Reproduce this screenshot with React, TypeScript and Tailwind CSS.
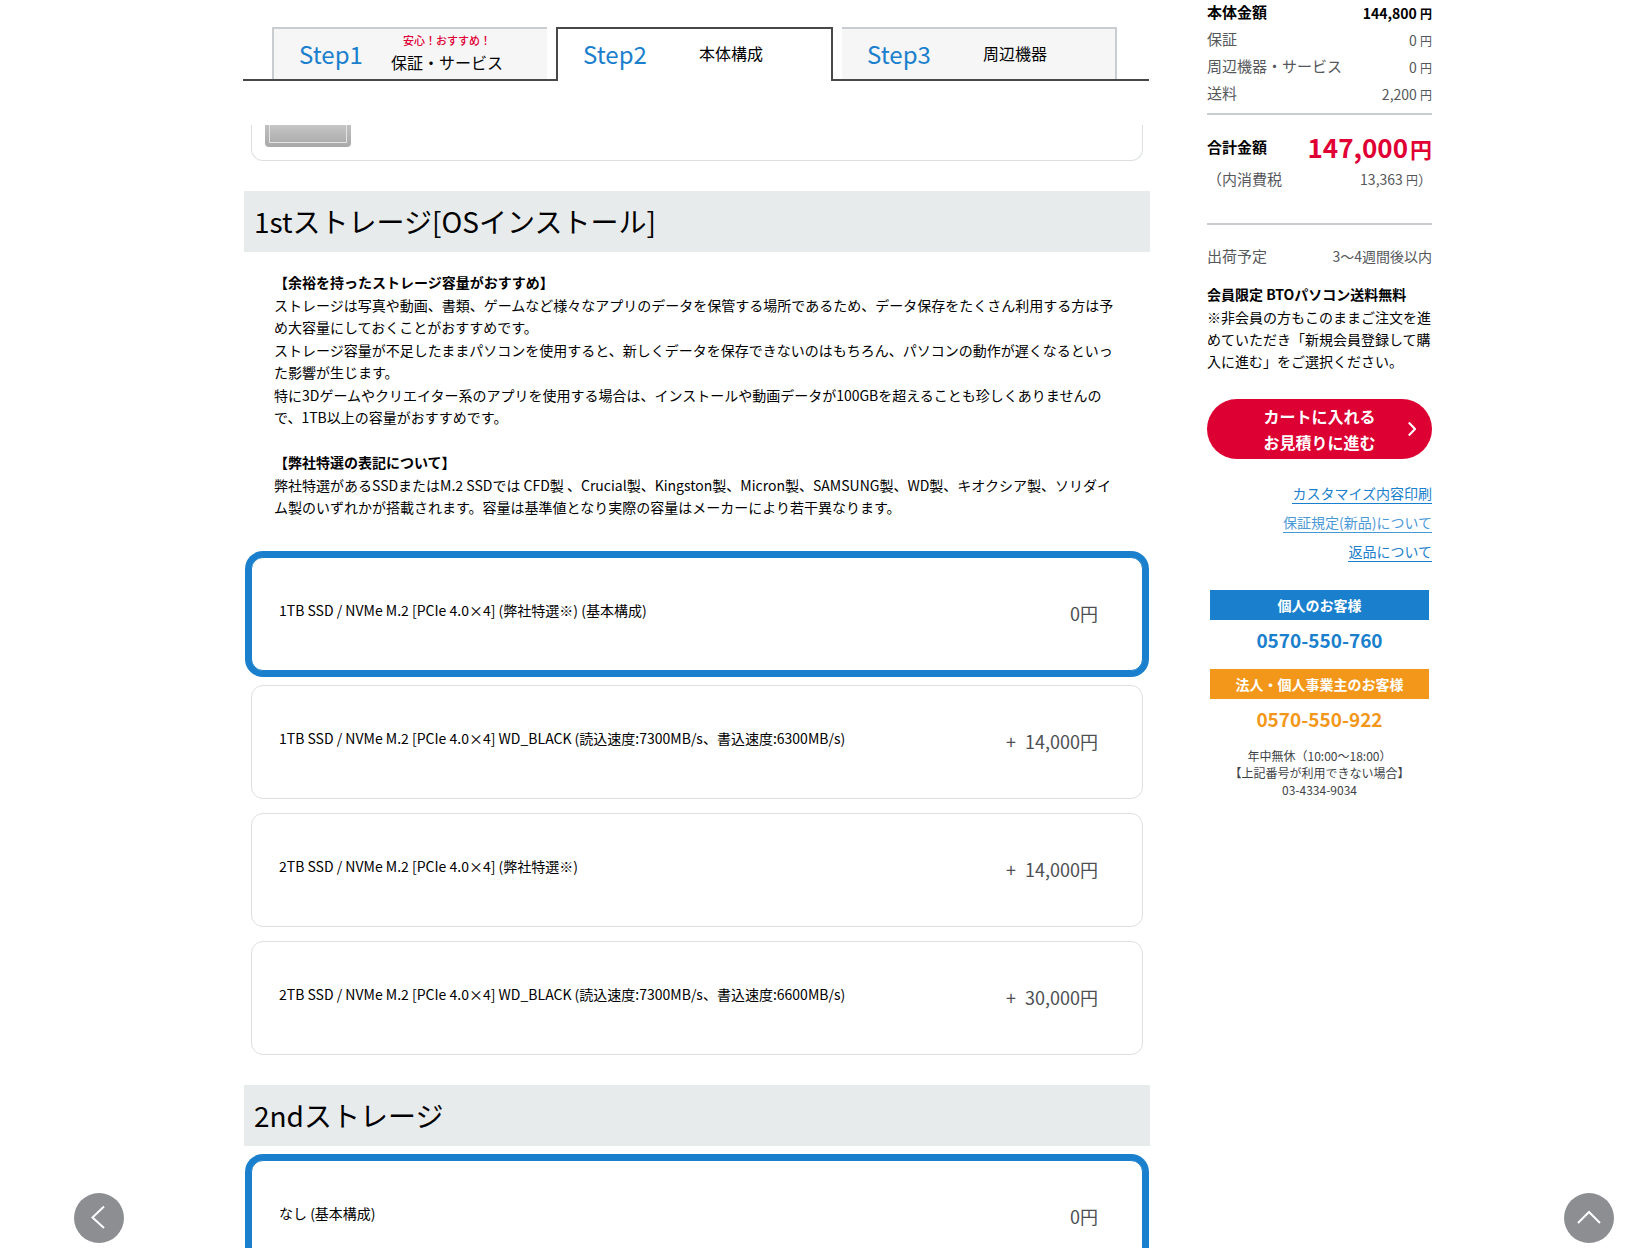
import { useState } from "react";
import type { ReactNode } from "react";

type Option = { id: string; name: string; price: string; plus?: boolean };

const firstStorage: Option[] = [
  { id: "s1", name: "1TB SSD / NVMe M.2 [PCIe 4.0×4] (弊社特選※) (基本構成)", price: "0円" },
  { id: "s2", name: "1TB SSD / NVMe M.2 [PCIe 4.0×4] WD_BLACK (読込速度:7300MB/s、書込速度:6300MB/s)", price: "14,000円", plus: true },
  { id: "s3", name: "2TB SSD / NVMe M.2 [PCIe 4.0×4] (弊社特選※)", price: "14,000円", plus: true },
  { id: "s4", name: "2TB SSD / NVMe M.2 [PCIe 4.0×4] WD_BLACK (読込速度:7300MB/s、書込速度:6600MB/s)", price: "30,000円", plus: true },
];

const secondStorage: Option[] = [{ id: "n1", name: "なし (基本構成)", price: "0円" }];

function StepLabel({ step, note, label }: { step: string; note?: string; label: string }) {
  return (
    <>
      <span className="text-2xl text-[#1a80cd]">{step}</span>
      <span className="flex flex-1 flex-col gap-0.5 pb-0.5 text-center">
        {note && <span className="text-[11px] leading-4 font-medium text-[#e00033]">{note}</span>}
        <span className="text-base leading-6">{label}</span>
      </span>
    </>
  );
}

function Tabs() {
  return (
    <nav className="mr-px grid h-[54px] grid-cols-[29px_1fr_10px_1fr_10px_1fr_32px]" aria-label="購入ステップ">
      <div className="border-b-2 border-[#48484a]" />
      <div className="flex border-b-2 border-[#48484a]">
        <button type="button" className="flex flex-1 items-center border-t-2 border-l-2 border-[#c9cdd1] bg-[#f6f6f6] pr-4 pl-[25px]">
          <StepLabel step="Step1" note="安心！おすすめ！" label="保証・サービス" />
        </button>
      </div>
      <div className="border-b-2 border-[#48484a]" />
      <button type="button" aria-current="step" className="-mx-px flex items-center border-x-2 border-t-2 border-[#48484a] pr-4 pb-0.5 pl-[25px]">
        <StepLabel step="Step2" label="本体構成" />
      </button>
      <div className="border-b-2 border-[#48484a]" />
      <div className="flex border-b-2 border-[#48484a]">
        <button type="button" className="flex flex-1 items-center border-t-2 border-r-2 border-[#c9cdd1] bg-[#f6f6f6] pr-4 pl-[25px]">
          <StepLabel step="Step3" label="周辺機器" />
        </button>
      </div>
      <div className="border-b-2 border-[#48484a]" />
    </nav>
  );
}

function Heading({ children }: { children: ReactNode }) {
  return <h2 className="bg-[#e7ebec] px-2.5 py-2.5 text-[28px] leading-[41px]">{children}</h2>;
}

function Options({ group, title, options }: { group: string; title: string; options: Option[] }) {
  const [selected, setSelected] = useState(options[0].id);
  return (
    <fieldset aria-label={title} className="mx-[7px] flex flex-col gap-3.5">
      {options.map((o) => (
        <label
          key={o.id}
          className="relative flex h-[114px] cursor-pointer items-center justify-between rounded-xl border border-[#dcdfe0] bg-white pr-11 pb-0.5 pl-[27px] has-checked:border-[#1a80cd] has-checked:ring-6 has-checked:ring-[#1a80cd]"
        >
          <input
            type="radio"
            name={group}
            className="absolute inset-0 size-full cursor-pointer appearance-none"
            checked={selected === o.id}
            onChange={() => setSelected(o.id)}
          />
          <span className="pb-1.5 text-sm">{o.name}</span>
          <span className="flex gap-[9px] text-lg text-[#4d4f53]">
            {o.plus && <span>+</span>}
            <span>{o.price}</span>
          </span>
        </label>
      ))}
    </fieldset>
  );
}

function Row({ label, value, strong }: { label: string; value: string; strong?: boolean }) {
  return (
    <div className={strong ? "flex justify-between font-bold text-black" : "mt-px flex justify-between"}>
      <dt className="text-[15px] leading-6">{label}</dt>
      <dd>
        {value} <span className="text-xs leading-none">円</span>
      </dd>
    </div>
  );
}

function Sidebar() {
  return (
    <aside className="w-[225px] shrink-0">
      <dl className="text-sm leading-[26px] text-[#55575b]">
        <Row label="本体金額" value="144,800" strong />
        <Row label="保証" value="0" />
        <Row label="周辺機器・サービス" value="0" />
        <Row label="送料" value="2,200" />
        <div className="mt-1.5 flex items-center justify-between border-t-2 border-[#c9cdd1] pt-3.5 font-bold">
          <dt className="text-[15px] text-black">合計金額</dt>
          <dd className="text-[26px] leading-9 text-[#e00033]">
            147,000<span className="ml-0.5 text-[22px] leading-none">円</span>
          </dd>
        </div>
        <div className="mt-px flex justify-between">
          <dt className="text-[15px]">（内消費税</dt>
          <dd>
            13,363 <span className="text-xs leading-none">円</span>）
          </dd>
        </div>
        <div className="mt-[31px] flex items-baseline justify-between border-t-2 border-[#c9cdd1] pt-[18px]">
          <dt className="text-[15px]">出荷予定</dt>
          <dd>3～4週間後以内</dd>
        </div>
      </dl>

      <div className="mt-3.5 flex flex-col gap-px text-sm leading-[22px]">
        <p className="font-bold">会員限定 BTOパソコン送料無料</p>
        <p>※非会員の方もこのままご注文を進めていただき「新規会員登録して購入に進む」をご選択ください。</p>
      </div>

      <button type="button" className="relative mt-[27px] flex h-[60px] w-full items-center justify-center rounded-full bg-[#dd0033] text-base leading-[26px] font-bold text-white">
        <span>
          カートに入れる
          <br />
          お見積りに進む
        </span>
        <svg className="absolute right-4 h-4 w-2" viewBox="0 0 8 16" fill="none" stroke="currentColor" strokeWidth="2" aria-hidden="true">
          <path d="M0.8 1.5 7 8 0.8 14.5" />
        </svg>
      </button>

      <div className="mt-6 flex flex-col items-end gap-2 text-sm text-[#1a80cd]">
        <a href="#print" className="border-b border-current leading-5">カスタマイズ内容印刷</a>
        <a href="#warranty" className="border-b border-current leading-5 opacity-80">保証規定(新品)について</a>
        <a href="#returns" className="border-b border-current leading-5">返品について</a>
      </div>

      <div className="mx-[3px] mt-7 text-center font-bold">
        <p className="bg-[#1a80cd] text-sm leading-[30px] text-white">個人のお客様</p>
        <p className="mb-[9px] text-[19px] leading-10 text-[#1a80cd]">0570-550-760</p>
        <p className="bg-[#f3971a] text-sm leading-[30px] text-white">法人・個人事業主のお客様</p>
        <p className="text-[19px] leading-10 text-[#f3971a]">0570-550-922</p>
      </div>
      <p className="mt-2 text-center text-xs leading-[17px] text-[#404246]">
        年中無休（10:00～18:00）
        <br />
        【上記番号が利用できない場合】
        <br />
        03-4334-9034
      </p>
    </aside>
  );
}

export default function App() {
  return (
    <div className="flex items-start gap-[57px] bg-white pr-[202px] pl-[243px] font-['Noto_Sans_CJK_JP',sans-serif] text-black">
      <main className="min-w-0 flex-1 pt-[27px]">
        <Tabs />
        <div className="mt-11 ml-px">
          <div className="mx-[7px] h-9 rounded-b-xl border border-t-0 border-[#dcdfe0] px-[13px]">
            <div className="h-[22px] w-[86px] rounded-b-sm bg-linear-to-b from-[#c0c0c0] to-[#a9a9a9] px-1 pb-1">
              <div className="h-full border border-t-0 border-[#e4e4e4] bg-linear-to-b from-[#c6c6c6] to-[#adadad]" />
            </div>
          </div>

          <section className="mt-[30px]">
            <Heading>1stストレージ[OSインストール]</Heading>
            <div className="flex flex-col gap-px px-[30px] pt-[19px] pb-[39px] text-sm leading-[22px]">
              <h3 className="font-bold">【余裕を持ったストレージ容量がおすすめ】</h3>
              <p>ストレージは写真や動画、書類、ゲームなど様々なアプリのデータを保管する場所であるため、データ保存をたくさん利用する方は予め大容量にしておくことがおすすめです。</p>
              <p>ストレージ容量が不足したままパソコンを使用すると、新しくデータを保存できないのはもちろん、パソコンの動作が遅くなるといった影響が生じます。</p>
              <p>特に3Dゲームやクリエイター系のアプリを使用する場合は、インストールや動画データが100GBを超えることも珍しくありませんので、1TB以上の容量がおすすめです。</p>
              <h3 className="mt-[22px] font-bold">【弊社特選の表記について】</h3>
              <p>弊社特選があるSSDまたはM.2 SSDでは CFD製 、Crucial製、Kingston製、Micron製、SAMSUNG製、WD製、キオクシア製、ソリダイム製のいずれかが搭載されます。容量は基準値となり実際の容量はメーカーにより若干異なります。</p>
            </div>
            <Options group="storage1" title="1stストレージ" options={firstStorage} />
          </section>

          <section className="mt-[30px]">
            <Heading>2ndストレージ</Heading>
            <div className="mt-3.5">
              <Options group="storage2" title="2ndストレージ" options={secondStorage} />
            </div>
          </section>
        </div>
      </main>

      <Sidebar />

      <button type="button" aria-label="戻る" className="fixed bottom-[5px] left-[74px] size-[50px] rounded-full bg-[#8d8e92] text-white">
        <svg viewBox="0 0 50 50" fill="none" stroke="currentColor" strokeWidth="2" aria-hidden="true">
          <path d="M30 13.5 18.5 24.5 30 35" />
        </svg>
      </button>
      <button type="button" aria-label="ページの先頭へ" className="fixed right-5 bottom-[5px] size-[50px] rounded-full bg-[#8d8e92] text-white">
        <svg viewBox="0 0 50 50" fill="none" stroke="currentColor" strokeWidth="2" aria-hidden="true">
          <path d="M14 30 25 19 36 30" />
        </svg>
      </button>
    </div>
  );
}
